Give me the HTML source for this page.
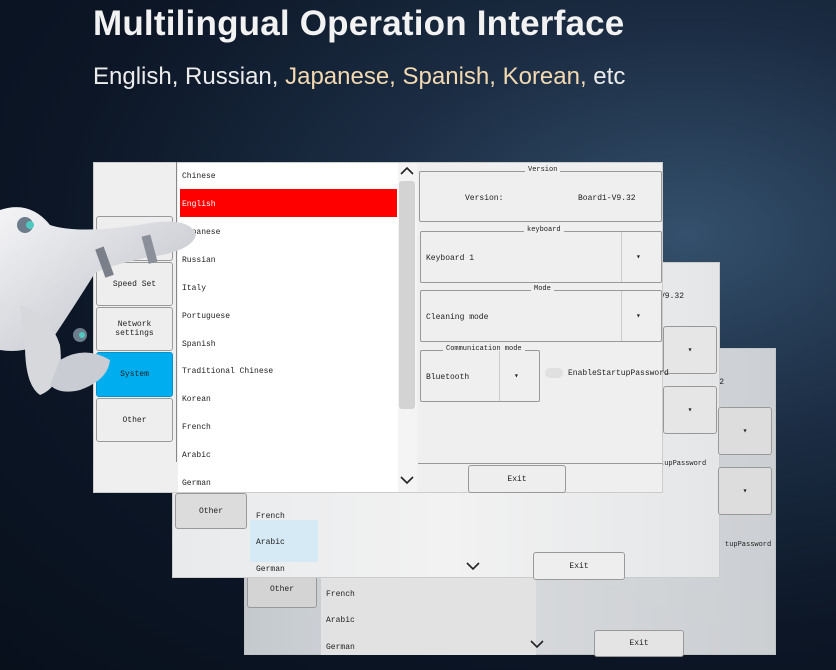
<!DOCTYPE html>
<html><head><meta charset="utf-8"><style>
*{margin:0;padding:0;box-sizing:border-box}
body{width:836px;height:670px;overflow:hidden;position:relative;font-family:"Liberation Sans",sans-serif;
background:radial-gradient(ellipse at 82% 35%,#34506c 0%,#1c2e45 32%,#0c1626 65%,#08101c 100%)}
.a{position:absolute}
.h1{left:93px;top:4px;color:#f2f2f2;font-size:35px;font-weight:bold;letter-spacing:0.2px}
.h2{left:93px;top:63px;color:#ececec;font-size:24px}
.h2 span{color:#f3d9b1}
.win{position:absolute;background:#efefef;border:1px solid #ccc}
.m{font-family:"Liberation Mono",monospace;font-size:8px;color:#222}
.btn{position:absolute;background:#eee;border:1px solid #999;border-radius:3px;font-family:"Liberation Mono",monospace;font-size:8px;display:flex;align-items:center;justify-content:center;color:#222;text-align:center}
.grp{position:absolute;border:1px solid #999;border-radius:2px}
.lbl{position:absolute;background:#efefef;padding:0 3px;font-family:"Liberation Mono",monospace;font-size:7px;top:-6px;color:#222}
.li{position:absolute;left:4px;font-family:"Liberation Mono",monospace;font-size:8px;color:#222}
</style></head><body>
<div class="a h1">Multilingual Operation Interface</div>
<div class="a h2">English, Russian, <span>Japanese, Spanish, Korean,</span> etc</div>

<!-- back window -->
<div class="win" style="left:244px;top:348px;width:532px;height:307px;background:linear-gradient(90deg,#cfd3d8,#e4e6e8 40%,#d6d9dc);opacity:.95"></div>
<div class="btn" style="left:247px;top:570px;width:70px;height:38px;background:#d4d4d4">Other</div>
<div class="a" style="left:321px;top:560px;width:215px;height:95px;background:#e2e2e2"></div>
<div class="li" style="left:326px;top:590px">French</div>
<div class="li" style="left:326px;top:616px">Arabic</div>
<div class="li" style="left:326px;top:643px">German</div>
<svg class="a" style="left:528px;top:638px" width="18" height="12"><path d="M3 3 L9 9 L15 3" fill="none" stroke="#222" stroke-width="1.6"/></svg>
<div class="btn" style="left:594px;top:630px;width:90px;height:27px;background:#e4e4e4">Exit</div>
<div class="a m" style="left:700px;top:378px">V9.32</div>

<!-- middle window -->
<div class="win" style="left:172px;top:262px;width:548px;height:316px;background:linear-gradient(90deg,#e8eaec,#f2f2f2 50%,#e4e6e8)"></div>
<div class="btn" style="left:175px;top:493px;width:72px;height:36px;background:#dcdcdc">Other</div>
<div class="a" style="left:250px;top:520px;width:68px;height:42px;background:#d6eaf6"></div>
<div class="li" style="left:256px;top:512px">French</div>
<div class="li" style="left:256px;top:538px">Arabic</div>
<div class="li" style="left:256px;top:565px">German</div>
<svg class="a" style="left:464px;top:560px" width="18" height="12"><path d="M3 3 L9 9 L15 3" fill="none" stroke="#222" stroke-width="1.6"/></svg>
<div class="btn" style="left:533px;top:552px;width:92px;height:28px">Exit</div>
<div class="a m" style="left:660px;top:292px">V9.32</div>
<div class="btn" style="left:663px;top:326px;width:54px;height:48px;background:#e6e6e6">▾</div>
<div class="btn" style="left:663px;top:386px;width:54px;height:48px;background:#e6e6e6">▾</div>
<div class="m a" style="left:660px;top:460px;font-size:7px">tupPassword</div>
<div class="btn" style="left:718px;top:407px;width:54px;height:48px;background:#ddd">▾</div>
<div class="btn" style="left:718px;top:467px;width:54px;height:48px;background:#ddd">▾</div>
<div class="m a" style="left:725px;top:541px;font-size:7px">tupPassword</div>

<!-- front window -->
<div class="win" style="left:93px;top:162px;width:570px;height:331px;background:#efefef"></div>
<div class="btn" style="left:96px;top:216px;width:77px;height:45px">Laser settings</div>
<div class="btn" style="left:96px;top:262px;width:77px;height:44px">Speed Set</div>
<div class="btn" style="left:96px;top:307px;width:77px;height:44px">Network settings</div>
<div class="btn" style="left:96px;top:352px;width:77px;height:45px;background:#00aeef;border-color:#0890c8">System</div>
<div class="btn" style="left:96px;top:398px;width:77px;height:44px">Other</div>
<div class="a" style="left:176px;top:162px;width:1px;height:300px;background:#888"></div>
<div class="a" style="left:178px;top:163px;width:220px;height:329px;background:#fff"></div>
<div class="a" style="left:180px;top:189px;width:217px;height:28px;background:#ff0000"></div>
<div class="li" style="left:182px;top:172px">Chinese</div>
<div class="li" style="left:182px;top:200px;color:#fff">English</div>
<div class="li" style="left:182px;top:228px">Japanese</div>
<div class="li" style="left:182px;top:256px">Russian</div>
<div class="li" style="left:182px;top:284px">Italy</div>
<div class="li" style="left:182px;top:312px">Portuguese</div>
<div class="li" style="left:182px;top:340px">Spanish</div>
<div class="li" style="left:182px;top:367px">Traditional Chinese</div>
<div class="li" style="left:182px;top:395px">Korean</div>
<div class="li" style="left:182px;top:423px">French</div>
<div class="li" style="left:182px;top:451px">Arabic</div>
<div class="li" style="left:182px;top:479px">German</div>
<div class="a" style="left:398px;top:163px;width:19px;height:329px;background:#f4f4f4"></div>
<div class="a" style="left:399px;top:181px;width:16px;height:228px;background:#d3d3d3;border-radius:3px"></div>
<svg class="a" style="left:398px;top:165px" width="18" height="12"><path d="M3 9 L9 3 L15 9" fill="none" stroke="#222" stroke-width="1.6"/></svg>
<svg class="a" style="left:398px;top:474px" width="18" height="12"><path d="M3 3 L9 9 L15 3" fill="none" stroke="#222" stroke-width="1.6"/></svg>

<div class="grp" style="left:419px;top:171px;width:243px;height:51px"><span class="lbl" style="left:105px">Version</span>
<span class="m a" style="left:45px;top:22px">Version:</span><span class="m a" style="left:158px;top:22px">Board1-V9.32</span></div>
<div class="grp" style="left:420px;top:231px;width:242px;height:52px"><span class="lbl" style="left:103px">keyboard</span>
<span class="m a" style="left:5px;top:22px">Keyboard 1</span><span class="a" style="left:200px;top:0;width:1px;height:50px;background:#ccc"></span><span class="m a" style="left:215px;top:20px">▾</span></div>
<div class="grp" style="left:420px;top:290px;width:242px;height:52px"><span class="lbl" style="left:110px">Mode</span>
<span class="m a" style="left:5px;top:22px">Cleaning mode</span><span class="a" style="left:200px;top:0;width:1px;height:50px;background:#ccc"></span><span class="m a" style="left:215px;top:20px">▾</span></div>
<div class="grp" style="left:420px;top:350px;width:120px;height:52px"><span class="lbl" style="left:22px">Communication mode</span>
<span class="m a" style="left:5px;top:22px">Bluetooth</span><span class="a" style="left:78px;top:0;width:1px;height:50px;background:#ccc"></span><span class="m a" style="left:93px;top:20px">▾</span></div>
<div class="a" style="left:545px;top:368px;width:18px;height:10px;border-radius:5px;background:#e0e0e0"></div>
<div class="a m" style="left:568px;top:369px">EnableStartupPassword</div>
<div class="a" style="left:418px;top:463px;width:245px;height:1px;background:#999"></div>
<div class="btn" style="left:468px;top:465px;width:98px;height:28px">Exit</div>

<!-- robot hand approximation -->
<svg class="a" style="left:0;top:195px" width="200" height="230">
<defs><linearGradient id="g" x1="0" y1="0" x2="1" y2="1"><stop offset="0" stop-color="#f4f4f6"/><stop offset="1" stop-color="#b8bcc4"/></linearGradient></defs>
<path d="M0 15 Q30 5 50 30 Q80 40 150 28 Q190 22 196 40 Q192 56 150 62 Q110 70 95 78 Q75 110 55 140 Q30 160 0 155 Z" fill="url(#g)"/>
<path d="M20 110 Q50 120 60 150 Q65 190 40 200 Q25 190 25 150Z" fill="#d6d8dc"/>
<path d="M60 165 Q85 150 110 165 Q108 185 80 195 Q60 200 50 190Z" fill="#c9ccd2"/>
<rect x="145" y="40" width="9" height="28" fill="#8a8f99" transform="rotate(-15 150 54)"/>
<rect x="100" y="52" width="9" height="30" fill="#7a808a" transform="rotate(-20 105 67)"/>
<circle cx="25" cy="30" r="8" fill="#6c7c8a"/><circle cx="30" cy="30" r="4" fill="#4ec9c0"/>
<circle cx="80" cy="140" r="7" fill="#6c7c8a"/><circle cx="82" cy="140" r="3" fill="#4ec9c0"/>
</svg>
</body></html>
